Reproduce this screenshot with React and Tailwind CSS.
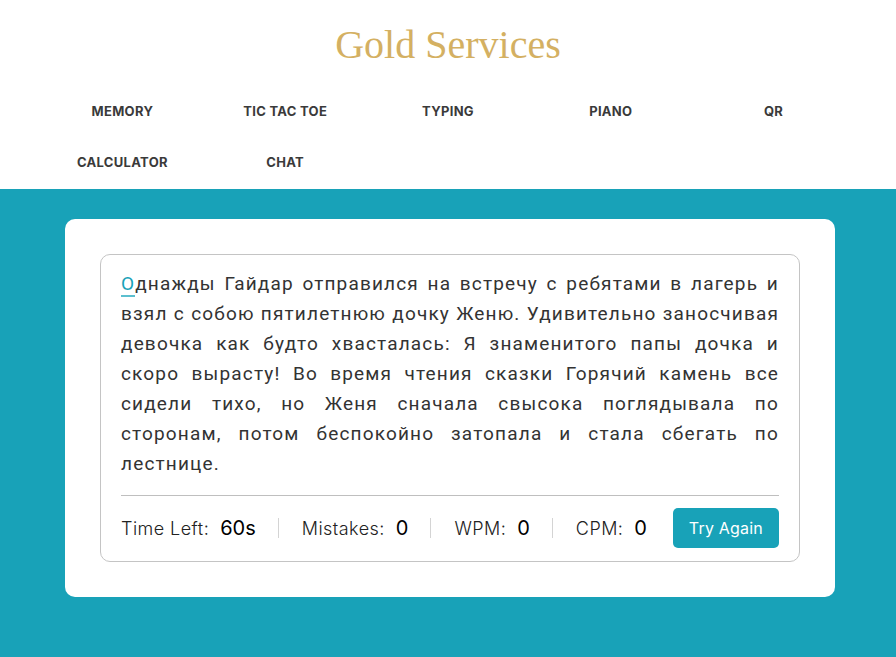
import React, { useState } from 'react';

const NAV = ['Memory', 'Tic Tac Toe', 'Typing', 'Piano', 'QR', 'Calculator', 'Chat'];

const TEXT =
  'Однажды Гайдар отправился на встречу с ребятами в лагерь и взял с собою пятилетнюю дочку Женю. Удивительно заносчивая девочка как будто хвасталась: Я знаменитого папы дочка и скоро вырасту! Во время чтения сказки Горячий камень все сидели тихо, но Женя сначала свысока поглядывала по сторонам, потом беспокойно затопала и стала сбегать по лестнице.';

function Stat({ label, value, last }) {
  return (
    <div className={`flex items-center gap-[11px] ${last ? '' : 'border-r border-[#d4d4d4] pr-[22px] mr-[23px]'} h-[20px]`}>
      <span className="text-[18px] font-light text-[#222] tracking-[0.45px]">{label}</span>
      <span className="text-[20px] font-normal text-black">{value}</span>
    </div>
  );
}

export default function App() {
  const [idx] = useState(0);

  return (
    <div className="min-h-[657px] flex flex-col bg-white font-['Inter',sans-serif]">
      <header className="bg-white">
        <h1 className="text-center pt-[22px] pb-[18px] text-[40px] leading-[46px] text-[#d4b062] font-['Liberation_Serif',serif]">
          Gold Services
        </h1>
        <nav className="grid grid-cols-5 px-[41px] pb-[1px]">
          {NAV.map(n => (
            <a key={n} href="#" className="h-[51px] flex items-center justify-center text-[13px] font-bold uppercase text-[#3a3a3a] tracking-[0.3px]">
              {n}
            </a>
          ))}
        </nav>
      </header>

      <main className="flex-1 bg-[#18a2b8] pl-[65px] pr-[61px] pt-[30px] pb-[60px]">
        <div className="bg-white rounded-[10px] px-[35px] py-[35px]">
          <div className="border border-[#c4c4c4] rounded-[10px] px-[20px] pt-[14px] pb-[13px]">
            <p className="text-[19px] leading-[30px] text-[#333] text-justify tracking-[1.15px] font-['Roboto',sans-serif]">
              {TEXT.split('').map((ch, i) => (
                <span key={i} className={i === idx ? 'text-[#18a2b8] border-b-2 border-[#5cbfcf]' : ''}>
                  {ch}
                </span>
              ))}
            </p>
            <div className="border-t border-[#bfbfbf] mt-[16px] pt-[12px] flex items-center justify-between">
              <div className="flex items-center">
                <Stat label="Time Left:" value="60s" />
                <Stat label="Mistakes:" value="0" />
                <Stat label="WPM:" value="0" />
                <Stat label="CPM:" value="0" last />
              </div>
              <button className="bg-[#18a2b8] text-white text-[16px] tracking-[0.2px] rounded-[5px] h-[40px] px-[16px]">
                Try Again
              </button>
            </div>
          </div>
        </div>
      </main>
    </div>
  );
}
